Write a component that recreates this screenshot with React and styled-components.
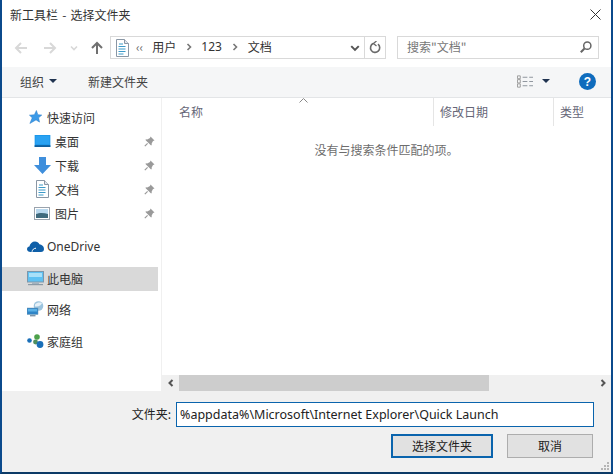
import React from "react"
import styled, { createGlobalStyle } from "styled-components"

const GlobalStyle = createGlobalStyle`
  html, body {
    margin: 0;
    padding: 0;
    background: #fff;
  }
`

const FONT = `"Noto Sans CJK SC", "Noto Sans", sans-serif`

const Dialog = styled.div`
  width: 613px;
  height: 474px;
  box-sizing: border-box;
  border-left: 2px solid #0b4a8c;
  border-right: 2px solid #0b4a8c;
  border-bottom: 2px solid #0c3a66;
  display: flex;
  flex-direction: column;
  background: #fff;
  font-family: ${FONT};
  font-size: 12px;
  color: #222;
  overflow: hidden;
`

const TitleBar = styled.div`
  height: 28px;
  flex: none;
  display: flex;
  align-items: center;
  justify-content: space-between;
  padding: 0 10px 0 8px;
  font-size: 12px;
  word-spacing: 1.5px;
  color: #333;
`

const NavRow = styled.div`
  height: 39px;
  flex: none;
  display: flex;
  align-items: flex-start;
  padding-top: 8px;
  box-sizing: border-box;
`

const NavButtons = styled.div`
  width: 108px;
  height: 23px;
  flex: none;
  display: flex;
  align-items: center;
`

const NavSlot = styled.div`
  width: ${(p) => p.$w}px;
  display: flex;
  justify-content: center;
  flex: none;
`

const AddressBar = styled.div`
  width: 276px;
  height: 23px;
  flex: none;
  box-sizing: border-box;
  border: 1px solid #d9d9d9;
  display: flex;
  align-items: center;
  margin-right: 11px;
`

const Crumbs = styled.div`
  flex: 1;
  display: flex;
  align-items: center;
  padding-left: 4px;
  color: #333;
`

const Crumb = styled.span`
  margin-left: ${(p) => p.$ml || 0}px;
  margin-bottom: 2px;
  display: flex;
  align-items: center;
  font-family: ${(p) => (p.$latin ? `"Noto Sans", sans-serif` : "inherit")};
  color: ${(p) => p.$color || "inherit"};
`

const RefreshSlot = styled.div`
  width: 20px;
  height: 21px;
  border-left: 1px solid #d9d9d9;
  display: flex;
  align-items: center;
  justify-content: center;
`

const SearchBox = styled.div`
  width: 202px;
  height: 23px;
  box-sizing: border-box;
  border: 1px solid #d9d9d9;
  display: flex;
  align-items: center;
  justify-content: space-between;
  padding: 0 6px 2px 9px;
  color: #777;
`

const Toolbar = styled.div`
  height: 31px;
  flex: none;
  background: #f5f6f7;
  border-bottom: 1px solid #e3e5e7;
  box-sizing: border-box;
  display: flex;
  align-items: center;
  padding: 0 15px 2px 18px;
  color: #444;
`

const ToolItem = styled.div`
  display: flex;
  align-items: center;
  gap: ${(p) => p.$gap || 5}px;
  margin-right: ${(p) => p.$mr || 0}px;
`

const Caret = styled.span`
  width: 0;
  height: 0;
  border-left: 4px solid transparent;
  border-right: 4px solid transparent;
  border-top: 4px solid #1f3350;
`

const ToolSpacer = styled.div`
  flex: 1;
`

const Main = styled.div`
  flex: 1;
  display: flex;
  min-height: 0;
`

const Sidebar = styled.div`
  width: 159px;
  flex: none;
  border-right: 1px solid #f0f0f0;
  display: flex;
  flex-direction: column;
  padding-top: 8px;
`

const NavRowItem = styled.div`
  height: 24px;
  flex: none;
  display: flex;
  align-items: center;
  padding-left: ${(p) => p.$indent}px;
  padding-bottom: 2px;
  margin-top: ${(p) => p.$mt || 0}px;
  width: 156px;
  box-sizing: border-box;
  background: ${(p) => (p.$selected ? "#d9d9d9" : "transparent")};
  color: #333;
`

const LatinLabel = styled.span`
  font-family: "Noto Sans", sans-serif;
`

const NavIcon = styled.div`
  width: 20px;
  display: flex;
  justify-content: center;
  flex: none;
  margin-right: ${(p) => p.$gap}px;
`

const Pin = styled.div`
  margin-left: auto;
  margin-right: 3px;
  display: flex;
`

const Files = styled.div`
  flex: 1;
  min-width: 0;
  display: flex;
  flex-direction: column;
`

const HeaderRow = styled.div`
  height: 28px;
  flex: none;
  display: flex;
  color: #667;
`

const HeaderCell = styled.div`
  width: ${(p) => p.$w}px;
  flex: ${(p) => (p.$w ? "none" : 1)};
  box-sizing: border-box;
  padding: 0 0 2px ${(p) => p.$pl}px;
  display: flex;
  align-items: center;
  border-left: ${(p) => (p.$sep ? "1px solid #e5e5e5" : "none")};
  position: relative;
`

const SortArrow = styled.svg`
  position: absolute;
  top: 0;
  left: 137px;
`

const EmptyNote = styled.div`
  flex: 1;
  text-align: center;
  padding-top: 15px;
  color: #6d6d6d;
`

const HScroll = styled.div`
  height: 16px;
  flex: none;
  display: flex;
  align-items: center;
  background: #f0f0f0;
`

const ScrollEnd = styled.div`
  width: 17px;
  flex: none;
  display: flex;
  justify-content: center;
`

const ScrollTrack = styled.div`
  flex: 1;
  height: 100%;
`

const ScrollThumb = styled.div`
  width: 310px;
  height: 100%;
  background: #cdcdcd;
`

const Footer = styled.div`
  height: 81px;
  flex: none;
  background: #f0f0f0;
  display: flex;
  flex-direction: column;
  padding: 11px 17px 0 0;
  box-sizing: border-box;
  position: relative;
`

const FieldRow = styled.div`
  display: flex;
  align-items: center;
  justify-content: flex-end;
  gap: 5px;
  color: #222;
`

const FieldLabel = styled.span`
  margin-bottom: 2px;
`

const PathInput = styled.div`
  width: 418px;
  height: 25px;
  box-sizing: border-box;
  border: 1px solid #0a64ad;
  background: #fff;
  display: flex;
  align-items: center;
  padding-left: 3px;
  font-family: "Noto Sans", sans-serif;
  font-size: 12.5px;
  color: #222;
`

const ButtonRow = styled.div`
  display: flex;
  justify-content: flex-end;
  gap: 14px;
  margin-top: 7px;
  padding-right: 1px;
`

const Button = styled.div`
  width: ${(p) => p.$w}px;
  height: 24px;
  box-sizing: border-box;
  background: #e1e1e1;
  border: ${(p) => (p.$primary ? "2px solid #0a64ad" : "1px solid #adadad")};
  padding-bottom: 2px;
  display: flex;
  align-items: center;
  justify-content: center;
  color: #222;
`

const Grip = styled.svg`
  position: absolute;
  right: 1px;
  bottom: 1px;
`

const ArrowIcon = ({ dir, color }) => (
  <svg width="14" height="14" viewBox="0 0 14 14" fill="none" stroke={color} strokeWidth="2">
    {dir === "left" && <path d="M13 7H2M7 2 2 7l5 5" />}
    {dir === "right" && <path d="M1 7h11M7 2l5 5-5 5" />}
    {dir === "up" && <path d="M7 13V2M2 7l5-5 5 5" />}
  </svg>
)

const Chevron = ({ dir = "right", color = "#666", size = 8, w = 1.6 }) => {
  const d = {
    right: "M2.5 1 5.5 4 2.5 7",
    left: "M5.5 1 2.5 4 5.5 7",
    down: "M1 2.5 4 5.5 7 2.5",
  }[dir]
  return (
    <svg width={size} height={size} viewBox="0 0 8 8" fill="none" stroke={color} strokeWidth={w}>
      <path d={d} />
    </svg>
  )
}

const DocIcon = () => (
  <svg width="14" height="18" viewBox="0 0 14 18">
    <path d="M1.5.5h8l4 4v13h-12z" fill="#fff" stroke="#8a97a5" />
    <path d="M9.5.5v4h4" fill="#dfe6ee" stroke="#8a97a5" />
    <path d="M4 5h4M3.5 7.5h7M3.5 10h7M3.5 12.5h7M3.5 15h5" stroke="#3c9ac9" strokeWidth="1" />
  </svg>
)

const StarIcon = () => (
  <svg width="14" height="14" viewBox="0 0 15 15">
    <path d="M9 .5 10.6 5 14.8 5.4 11.4 8.4 12.4 13 8.6 10.6 2 14.5 4.5 8.4 1.5 5.5 6.8 5z" fill="#3b9ae8" stroke="#2a78c4" strokeWidth=".5" />
  </svg>
)

const DesktopIcon = () => (
  <svg width="17" height="12" viewBox="0 0 17 13">
    <rect x="0" y="0" width="17" height="13" fill="#1c97ea" />
    <rect x="0" y="11" width="17" height="2" fill="#0f5f9e" />
    <rect x="1" y="1" width="15" height="9" fill="#2aa2f2" />
  </svg>
)

const DownloadIcon = () => (
  <svg width="17" height="17" viewBox="0 0 17 17">
    <path d="M5 0h7v8h5l-8.5 9L0 8h5z" fill="#3f8fdc" />
  </svg>
)

const PictureIcon = () => (
  <svg width="16" height="13" viewBox="0 0 16 13">
    <rect x=".5" y=".5" width="15" height="12" fill="#fff" stroke="#9aa3ad" />
    <rect x="2" y="2" width="12" height="5" fill="#b9d8ee" />
    <path d="M2 7c3-1.5 8-1.5 12 0v4H2z" fill="#3f6a7d" />
  </svg>
)

const PinIcon = () => (
  <svg width="11" height="11" viewBox="0 0 11 11">
    <path d="M6.5.5 10.5 4.5 9 5 7.6 7.8 7.8 9.3 6.8 9.3 1.7 4.2 1.7 3.2 3.2 3.4 6 2z" fill="#9a9a9a" />
    <path d="M3.6 7.4.8 10.2" stroke="#9a9a9a" strokeWidth="1.2" />
  </svg>
)

const CloudIcon = () => (
  <svg width="17" height="11" viewBox="0 0 17 11">
    <path d="M3.5 11C1.5 11 0 9.8 0 8.2 0 6.8 1 5.8 2.4 5.6 3 2.6 5.2.5 8 .5c2 0 3.6 1 4.4 2.8 2.4.2 4.6 2 4.6 4.6 0 1.8-1.2 3.1-3 3.1z" fill="#0f5fa8" />
    <path d="M5 10.8c.3-2.2 2-3.6 4-3.6" stroke="#fff" strokeWidth="1" fill="none" />
  </svg>
)

const PcIcon = () => (
  <svg width="17" height="15" viewBox="0 0 17 15">
    <rect x=".5" y=".5" width="16" height="10.5" fill="#5ec1f2" stroke="#7c97ab" />
    <rect x="2" y="2" width="13" height="4" fill="#a8e0f8" />
    <rect x="5" y="11" width="7" height="2" fill="#a3b3bf" />
    <rect x="1" y="13" width="15" height="1.2" fill="#8b9aa6" />
  </svg>
)

const NetworkIcon = () => (
  <svg width="17" height="16" viewBox="0 0 17 16">
    <circle cx="11.5" cy="5" r="4.8" fill="#9cc4de" />
    <path d="M8 3.5c2-2 4-2.5 7-1.5-1 2.5-3 4-7 3.5z" fill="#e6f1f8" />
    <rect x="0" y="7" width="11" height="6.5" fill="#2f85c7" stroke="#7098b4" strokeWidth=".5" />
    <rect x="1" y="8" width="9" height="2.5" fill="#5ab1e6" />
    <rect x="3" y="14" width="5.5" height="1.4" fill="#7d95a8" />
  </svg>
)

const HomegroupIcon = () => (
  <svg width="17" height="15" viewBox="0 0 17 15">
    <circle cx="2.5" cy="6.5" r="2.3" fill="#1a6fb8" />
    <circle cx="10" cy="3" r="2.8" fill="#4da14a" />
    <circle cx="8.5" cy="8" r="2.4" fill="#4e8f5f" />
    <circle cx="13" cy="10.5" r="3.4" fill="#1a6fb8" />
  </svg>
)

const RefreshIcon = () => (
  <svg width="12" height="13" viewBox="0 0 12 13" fill="none" stroke="#6a6a6a" strokeWidth="1.6">
    <path d="M4.2 2.6A4.6 4.6 0 1 0 9 3.2" />
    <path d="M7.5 0 4.4 2.6 7.5 5" strokeWidth="1.3" />
  </svg>
)

const SearchIcon = () => (
  <svg width="12" height="12" viewBox="0 0 12 12" fill="none" stroke="#666" strokeWidth="1.5">
    <circle cx="7.3" cy="4.7" r="3.6" />
    <path d="M4.5 7.5.8 11.2" strokeWidth="2" />
  </svg>
)

const ViewIcon = () => (
  <svg width="16" height="13" viewBox="0 0 17 13" fill="none" stroke="#9a9a9a">
    <path d="M.5.5h3v3h-3zM.5 4.5h3v3.5h-3zM.5 9h3v3.5h-3z" />
    <path d="M6 2h5M6 6.5h5M6 11h5M13 2h4M13 6.5h4M13 11h4" stroke="#8a9099" />
  </svg>
)

const HelpIcon = () => (
  <svg width="17" height="17" viewBox="0 0 17 17">
    <circle cx="8.5" cy="8.5" r="8.5" fill="#0f6cbd" />
    <text x="8.5" y="13" textAnchor="middle" fill="#fff" fontSize="12" fontWeight="700" fontFamily="Liberation Sans, sans-serif">?</text>
  </svg>
)

const quickAccess = [
  { label: "桌面", icon: <DesktopIcon /> },
  { label: "下载", icon: <DownloadIcon /> },
  { label: "文档", icon: <DocIcon /> },
  { label: "图片", icon: <PictureIcon /> },
]

const App = () => (
  <>
    <GlobalStyle />
    <Dialog>
      <TitleBar>
        <span>新工具栏 - 选择文件夹</span>
        <svg width="11" height="11" viewBox="0 0 11 11" stroke="#333" strokeWidth="1">
          <path d="M.5.5l10 10M10.5.5l-10 10" />
        </svg>
      </TitleBar>

      <NavRow>
        <NavButtons>
          <NavSlot $w={12} />
          <NavSlot $w={14}><ArrowIcon dir="left" color="#d8d8d8" /></NavSlot>
          <NavSlot $w={14} />
          <NavSlot $w={16}><ArrowIcon dir="right" color="#d8d8d8" /></NavSlot>
          <NavSlot $w={10} />
          <NavSlot $w={12}><Chevron dir="down" color="#d8d8d8" /></NavSlot>
          <NavSlot $w={8} />
          <NavSlot $w={18}><ArrowIcon dir="up" color="#707070" /></NavSlot>
        </NavButtons>
        <AddressBar>
          <Crumbs>
            <DocIcon />
            <Crumb $ml={7} $color="#666">‹‹</Crumb>
            <Crumb $ml={9}>用户</Crumb>
            <Crumb $ml={9}><Chevron color="#777" /></Crumb>
            <Crumb $ml={8} $latin>123</Crumb>
            <Crumb $ml={9}><Chevron color="#777" /></Crumb>
            <Crumb $ml={9}>文档</Crumb>
          </Crumbs>
          <Chevron dir="down" color="#555" size={10} />
          <NavSlot $w={4} />
          <RefreshSlot><RefreshIcon /></RefreshSlot>
        </AddressBar>
        <SearchBox>
          <span>搜索"文档"</span>
          <SearchIcon />
        </SearchBox>
      </NavRow>

      <Toolbar>
        <ToolItem $mr={31}>组织 <Caret /></ToolItem>
        <ToolItem>新建文件夹</ToolItem>
        <ToolSpacer />
        <ToolItem $mr={29} $gap={9}><ViewIcon /><Caret /></ToolItem>
        <HelpIcon />
      </Toolbar>

      <Main>
        <Sidebar>
          <NavRowItem $indent={23}>
            <NavIcon $gap={2}><StarIcon /></NavIcon>
            快速访问
          </NavRowItem>
          {quickAccess.map((item) => (
            <NavRowItem key={item.label} $indent={30}>
              <NavIcon $gap={3}>{item.icon}</NavIcon>
              {item.label}
              <Pin><PinIcon /></Pin>
            </NavRowItem>
          ))}
          <NavRowItem $indent={23} $mt={9}>
            <NavIcon $gap={2}><CloudIcon /></NavIcon>
            <LatinLabel>OneDrive</LatinLabel>
          </NavRowItem>
          <NavRowItem $indent={23} $mt={8} $selected>
            <NavIcon $gap={2}><PcIcon /></NavIcon>
            此电脑
          </NavRowItem>
          <NavRowItem $indent={23} $mt={7}>
            <NavIcon $gap={2}><NetworkIcon /></NavIcon>
            网络
          </NavRowItem>
          <NavRowItem $indent={23} $mt={8}>
            <NavIcon $gap={2}><HomegroupIcon /></NavIcon>
            家庭组
          </NavRowItem>
        </Sidebar>

        <Files>
          <HeaderRow>
            <HeaderCell $w={271} $pl={17}>
              名称
              <SortArrow width="9" height="5" viewBox="0 0 9 5" fill="none" stroke="#888">
                <path d="M.5 4.5l4-4 4 4" />
              </SortArrow>
            </HeaderCell>
            <HeaderCell $w={120} $pl={6} $sep>修改日期</HeaderCell>
            <HeaderCell $pl={6} $sep>类型</HeaderCell>
          </HeaderRow>
          <EmptyNote>没有与搜索条件匹配的项。</EmptyNote>
          <HScroll>
            <ScrollEnd><Chevron dir="left" color="#555" w={2} /></ScrollEnd>
            <ScrollTrack><ScrollThumb /></ScrollTrack>
            <ScrollEnd><Chevron color="#555" w={2} /></ScrollEnd>
          </HScroll>
        </Files>
      </Main>

      <Footer>
        <FieldRow>
          <FieldLabel>文件夹:</FieldLabel>
          <PathInput>%appdata%\Microsoft\Internet Explorer\Quick Launch</PathInput>
        </FieldRow>
        <ButtonRow>
          <Button $w={102} $primary>选择文件夹</Button>
          <Button $w={86}>取消</Button>
        </ButtonRow>
        <Grip width="10" height="10" viewBox="0 0 10 10" fill="#b5b5b5">
          <path d="M7 1h2v2H7zM4 4h2v2H4zM7 4h2v2H7zM1 7h2v2H1zM4 7h2v2H4zM7 7h2v2H7z" />
        </Grip>
      </Footer>
    </Dialog>
  </>
)

export default App
